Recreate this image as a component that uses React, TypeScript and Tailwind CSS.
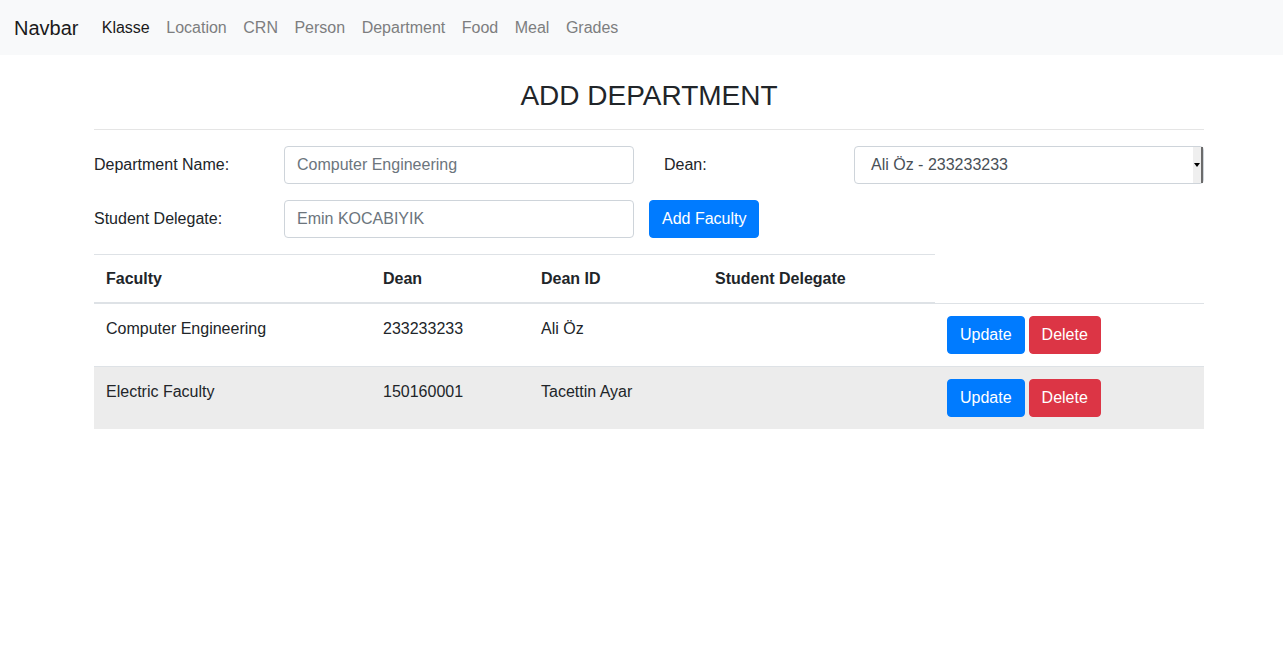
import React from "react"

const links = ["Klasse", "Location", "CRN", "Person", "Department", "Food", "Meal", "Grades"]

const rows = [
  { faculty: "Computer Engineering", dean: "233233233", deanId: "Ali Öz", delegate: "" },
  { faculty: "Electric Faculty", dean: "150160001", deanId: "Tacettin Ayar", delegate: "" },
]

export default function App() {
  return (
    <div className="min-h-[649px] bg-white text-[16px] leading-6 text-[#212529]" style={{ fontFamily: '"Liberation Sans", Arial, sans-serif' }}>
      <nav className="flex h-[55px] items-center bg-[#f8f9fa] pl-[14px]">
        <a className="mr-[15px] text-[20px] leading-[30px] text-[#1a1a1a]">Navbar</a>
        <ul className="flex">
          {links.map((l, i) => (
            <li key={l}>
              <a className={["block px-[8.25px] py-2", i === 0 ? "text-[#1a1a1a]" : "text-[#7d7e7f]"].join(" ")}>{l}</a>
            </li>
          ))}
        </ul>
      </nav>

      <div className="ml-[94px] w-[1110px]">
        <h3 className="mt-6 mb-2 text-center text-[28px] leading-[34px]">ADD DEPARTMENT</h3>
        <hr className="my-4 border-t border-[#e5e5e5]" />

        <div className="mb-4 grid grid-cols-[160px_350px_160px_350px] gap-x-[30px]">
          <label className="flex items-center">Department Name:</label>
          <input
            className="h-[38px] rounded border border-[#ced4da] px-3 text-[#495057] placeholder:text-[#6c757d] outline-none"
            placeholder="Computer Engineering"
          />
          <label className="flex items-center">Dean:</label>
          <div className="relative flex h-[38px] items-center rounded border border-[#ced4da] pl-4 text-[#495057]">
            Ali Öz - 233233233
            <div className="absolute top-0 right-0 bottom-0 flex w-[10px] items-center justify-center border-r-2 border-[#6b6b6b] bg-[#efefef]">
              <div className="h-0 w-0 border-x-[3px] border-t-[4px] border-x-transparent border-t-black" />
            </div>
          </div>
        </div>

        <div className="mb-4 grid grid-cols-[160px_350px_auto] gap-x-[30px]">
          <label className="flex items-center">Student Delegate:</label>
          <input
            className="h-[38px] rounded border border-[#ced4da] px-3 text-[#495057] placeholder:text-[#6c757d] outline-none"
            placeholder="Emin KOCABIYIK"
          />
          <div className="-ml-[15px]">
            <button className="h-[38px] rounded border border-[#007bff] bg-[#007bff] px-3 text-white">Add Faculty</button>
          </div>
        </div>

        <table className="w-full table-fixed border-collapse">
          <colgroup>
            <col className="w-[277px]" />
            <col className="w-[158px]" />
            <col className="w-[174px]" />
            <col className="w-[232px]" />
            <col />
          </colgroup>
          <thead>
            <tr>
              {["Faculty", "Dean", "Dean ID", "Student Delegate"].map((h) => (
                <th key={h} className="border-t border-b-2 border-[#dee2e6] px-3 pt-3 pb-[11px] text-left align-bottom font-bold">
                  {h}
                </th>
              ))}
            </tr>
          </thead>
          <tbody>
            {rows.map((r, i) => (
              <tr key={r.faculty} className={i === 1 ? "bg-[#ececec]" : ""}>
                <td className="border-t border-[#dee2e6] px-3 pt-[13px] pb-[11px] align-top">{r.faculty}</td>
                <td className="border-t border-[#dee2e6] px-3 pt-[13px] pb-[11px] align-top">{r.dean}</td>
                <td className="border-t border-[#dee2e6] px-3 pt-[13px] pb-[11px] align-top">{r.deanId}</td>
                <td className="border-t border-[#dee2e6] px-3 pt-[13px] pb-[11px] align-top">{r.delegate}</td>
                <td className="border-t border-[#dee2e6] p-3 align-top">
                  <div className="flex gap-1">
                    <button className="h-[38px] rounded border border-[#007bff] bg-[#007bff] px-3 text-white">Update</button>
                    <button className="h-[38px] rounded border border-[#dc3545] bg-[#dc3545] px-3 text-white">Delete</button>
                  </div>
                </td>
              </tr>
            ))}
          </tbody>
        </table>
      </div>
    </div>
  )
}
